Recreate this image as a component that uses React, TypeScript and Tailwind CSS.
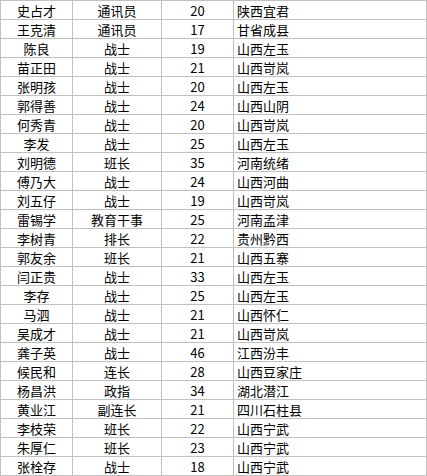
const rows: [string, string, string, string][] = [
  ['史占才', '通讯员', '20', '陕西宜君'],
  ['王克清', '通讯员', '17', '甘省成县'],
  ['陈良', '战士', '19', '山西左玉'],
  ['苗正田', '战士', '21', '山西岢岚'],
  ['张明孩', '战士', '20', '山西左玉'],
  ['郭得善', '战士', '24', '山西山阴'],
  ['何秀青', '战士', '20', '山西岢岚'],
  ['李发', '战士', '25', '山西左玉'],
  ['刘明德', '班长', '35', '河南统绪'],
  ['傅乃大', '战士', '24', '山西河曲'],
  ['刘五仔', '战士', '19', '山西岢岚'],
  ['雷锡学', '教育干事', '25', '河南孟津'],
  ['李树青', '排长', '22', '贵州黔西'],
  ['郭友余', '班长', '21', '山西五寨'],
  ['闫正贵', '战士', '33', '山西左玉'],
  ['李存', '战士', '25', '山西左玉'],
  ['马泗', '战士', '21', '山西怀仁'],
  ['吴成才', '战士', '21', '山西岢岚'],
  ['龚子英', '战士', '46', '江西汾丰'],
  ['候民和', '连长', '28', '山西豆家庄'],
  ['杨昌洪', '政指', '34', '湖北潜江'],
  ['黄业江', '副连长', '21', '四川石柱县'],
  ['李枝荣', '班长', '22', '山西宁武'],
  ['朱厚仁', '班长', '23', '山西宁武'],
  ['张栓存', '战士', '18', '山西宁武'],
];

const cell = 'h-[19px] border-r border-b border-[#c0c0c0] leading-[18px] pt-px whitespace-nowrap overflow-hidden';

export default function App() {
  return (
    <div className="w-[427px] h-[476px] bg-white text-black text-[13px] font-['Noto_Sans_CJK_SC','Noto_Sans',sans-serif]">
      <div className="grid grid-cols-[72px_89px_72px_193px] border-l border-t border-[#c0c0c0]">
        {rows.map((r, i) => (
          <div key={i} className="contents">
            <div className={`${cell} text-center`}>{r[0]}</div>
            <div className={`${cell} text-center`}>{r[1]}</div>
            <div className={`${cell} text-center`}>{r[2]}</div>
            <div className={`${cell} pl-[3px]`}>{r[3]}</div>
          </div>
        ))}
      </div>
    </div>
  );
}
